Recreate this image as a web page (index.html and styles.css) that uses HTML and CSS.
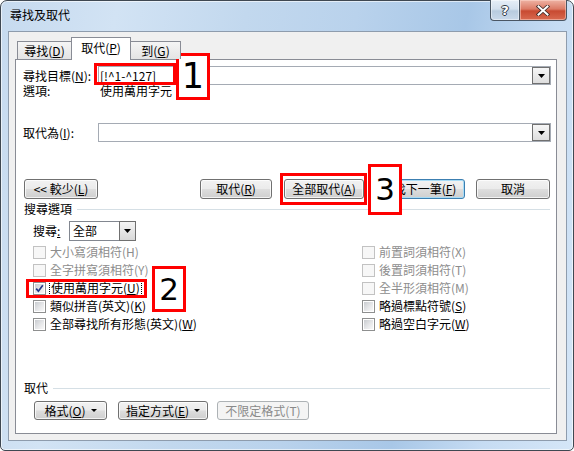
FILE: index.html
```html
<!DOCTYPE html>
<html lang="zh-Hant">
<head>
<meta charset="utf-8">
<title>尋找及取代</title>
<link rel="stylesheet" href="styles.css">
</head>
<body>
<div class="window">
  <div class="titlebar">
    <div class="title">尋找及取代</div>
    <div class="caption">
      <div class="cbtn help"><span class="qmark">?</span></div>
      <div class="cbtn close">
        <svg width="14" height="11" viewBox="0 0 14 11"><path d="M2.5 1.5 L11.5 9.5 M11.5 1.5 L2.5 9.5" stroke="#3b2a28" stroke-width="3.6" stroke-linecap="square"/><path d="M2.5 1.5 L11.5 9.5 M11.5 1.5 L2.5 9.5" stroke="#ffffff" stroke-width="2" stroke-linecap="square"/></svg>
      </div>
    </div>
  </div>
  <div class="client">
    <div class="tabs">
      <div class="tab t1">尋找(<u>D</u>)</div>
      <div class="tab active t2">取代(<u>P</u>)</div>
      <div class="tab t3">到(<u>G</u>)</div>
    </div>
    <div class="panel">
      <div class="row-field">
        <span class="lbl">尋找目標(<u>N</u>):</span>
        <div class="combo"><span class="val">[!^1-^127]</span><span class="drop"><svg width="7" height="4" viewBox="0 0 7 4"><polygon points="0,0 7,0 3.5,4" fill="#000"/></svg></span></div>
      </div>
      <div class="row-opt"><span class="lbl2">選項:</span><span>使用萬用字元</span></div>
      <div class="row-field replace">
        <span class="lbl">取代為(<u>I</u>):</span>
        <div class="combo"><span class="val"></span><span class="drop"><svg width="7" height="4" viewBox="0 0 7 4"><polygon points="0,0 7,0 3.5,4" fill="#000"/></svg></span></div>
      </div>
      <div class="btn-row">
        <button class="btn b-less">&lt;&lt; 較少(<u>L</u>)</button>
        <button class="btn b-rep">取代(<u>R</u>)</button>
        <button class="btn b-all">全部取代(<u>A</u>)</button>
        <button class="btn b-next default">尋找下一筆(<u>F</u>)</button>
        <button class="btn b-cancel">取消</button>
      </div>
      <div class="group g-search"><span>搜尋選項</span><span class="gline"></span></div>
      <div class="search-row">
        <span class="slbl">搜尋<u>:</u></span>
        <div class="select"><span class="sval">全部</span><span class="sdrop"><svg width="7" height="4" viewBox="0 0 7 4"><polygon points="0,0 7,0 3.5,4" fill="#000"/></svg></span></div>
      </div>
      <div class="checks">
        <div class="col">
          <div class="chk disabled"><span class="box"></span><span>大小寫須相符(H)</span></div>
          <div class="chk disabled"><span class="box"></span><span>全字拼寫須相符(Y)</span></div>
          <div class="chk"><span class="box"><svg width="11" height="11" viewBox="0 0 11 11"><path d="M2.2 5.6 L4.4 8.2 L8.8 2.2" stroke="#24378a" stroke-width="1.7" fill="none"/></svg></span><span class="focus">使用萬用字元(<u>U</u>)</span></div>
          <div class="chk"><span class="box"></span><span>類似拼音(英文)(<u>K</u>)</span></div>
          <div class="chk"><span class="box"></span><span>全部尋找所有形態(英文)(<u>W</u>)</span></div>
        </div>
        <div class="col">
          <div class="chk disabled"><span class="box"></span><span>前置詞須相符(X)</span></div>
          <div class="chk disabled"><span class="box"></span><span>後置詞須相符(T)</span></div>
          <div class="chk disabled"><span class="box"></span><span>全半形須相符(M)</span></div>
          <div class="chk"><span class="box"></span><span>略過標點符號(<u>S</u>)</span></div>
          <div class="chk"><span class="box"></span><span>略過空白字元(<u>W</u>)</span></div>
        </div>
      </div>
      <div class="group g-replace"><span>取代</span><span class="gline"></span></div>
      <div class="bottom-btns">
        <button class="btn b-fmt">格式(<u>O</u>)<i class="arr"></i></button>
        <button class="btn b-spec">指定方式(<u>E</u>)<i class="arr"></i></button>
        <button class="btn b-nofmt" disabled>不限定格式(T)</button>
      </div>
    </div>
  </div>
</div>

<div class="mark hl1"></div>
<div class="mark num n1">1</div>
<div class="mark hl3"></div>
<div class="mark num n3">3</div>
<div class="mark hl2"></div>
<div class="mark num n2">2</div>
</body>
</html>
```

FILE: styles.css
```css
* { box-sizing: border-box; }
html, body { margin: 0; padding: 0; }
body {
  width: 574px;
  height: 451px;
  background: #ffffff;
  font-family: "Noto Sans CJK TC", "Noto Sans CJK SC", sans-serif;
  font-size: 12px;
  color: #000;
  position: relative;
  overflow: hidden;
}
u { text-underline-offset: 1px; }

.window {
  width: 574px;
  height: 451px;
  border: 1px solid #3f4852;
  border-radius: 7px 7px 5px 5px;
  background: linear-gradient(100deg, #c6daef 0%, #d2e3f4 18%, #c2d8ee 38%, #b9d2ec 55%, #a8c7e7 72%, #c6dcf3 86%, #d5e6f7 100%);
  box-shadow: inset 0 0 0 1px rgba(255,255,255,0.6);
  display: flex;
  flex-direction: column;
  padding: 0 6px 9px 7px;
}

.titlebar {
  height: 30px;
  flex: none;
  display: flex;
  align-items: flex-start;
}
.title {
  padding-left: 2px;
  margin-top: 7px;
  line-height: 14px;
}
.caption {
  margin-left: auto;
  display: flex;
  margin-top: -1px;
}
.cbtn {
  height: 21px;
  border: 1px solid #4a5664;
  border-top: none;
  display: flex;
  align-items: center;
  justify-content: center;
}
.help {
  width: 29px;
  border-right: none;
  border-radius: 0 0 0 4px;
  background: linear-gradient(#e6eef7 0%, #d3e0ee 45%, #b8cbdf 55%, #c9d9ea 100%);
  box-shadow: inset 0 0 0 1px rgba(255,255,255,0.45);
}
.qmark {
  font-family: "DejaVu Sans", sans-serif;
  font-weight: bold;
  font-size: 13px;
  line-height: 13px;
  color: #fff;
  text-shadow: 1px 0 0 #2f3a46, -1px 0 0 #2f3a46, 0 1px 0 #2f3a46, 0 -1px 0 #2f3a46;
}
.close {
  width: 48px;
  border-radius: 0 0 4px 0;
  background: linear-gradient(#eeb3a4 0%, #dc7b66 45%, #c84a31 55%, #d86a50 100%);
  box-shadow: inset 0 0 0 1px rgba(255,220,210,0.5);
}
.close svg { display: block; }

.client {
  flex: 1;
  background: #f0f0f0;
  border: 1px solid #8e9cad;
  padding: 5px 8px 0 6px;
  display: flex;
  flex-direction: column;
}

.tabs {
  display: flex;
  align-items: flex-end;
  height: 23px;
  margin-left: 2px;
  margin-bottom: -1px;
  position: relative;
  z-index: 1;
}
.tab {
  height: 18px;
  margin-bottom: 1px;
  border: 1px solid #898c95;
  border-bottom: none;
  background: linear-gradient(#f5f5f5, #e4e4e4);
  display: flex;
  align-items: center;
  justify-content: center;
  line-height: 14px;
  padding-top: 1px;
}
.t1 { width: 55px; }
.t2 { width: 60px; margin-left: -1px; }
.t3 { width: 51px; margin-left: -1px; }
.tab.active {
  height: 23px;
  margin-bottom: 0;
  background: #fff;
  position: relative;
  z-index: 2;
  padding-top: 0;
  padding-bottom: 3px;
}

.panel {
  width: 542px;
  height: 375px;
  flex: none;
  background: #fff;
  border: 1px solid #898c95;
  padding: 6px 5px 0 7px;
}

.row-field {
  display: flex;
  align-items: center;
  height: 19px;
}
.lbl { width: 75px; flex: none; line-height: 14px; }
.combo {
  flex: 1;
  height: 19px;
  border: 1px solid #a5abb4;
  display: flex;
  align-items: center;
  background: #fff;
}
.val { flex: 1; padding-left: 1px; line-height: 14px; }
.drop {
  width: 18px;
  height: 17px;
  border: 1px solid #707070;
  background: linear-gradient(#f6f6f6, #dedede);
  display: flex;
  align-items: center;
  justify-content: center;
}
.drop svg, .sdrop svg { display: block; }

.row-opt {
  display: flex;
  height: 12px;
  line-height: 12px;
}
.lbl2 { width: 77px; flex: none; }

.replace { margin-top: 26px; }

.btn {
  font: inherit;
  color: #000;
  height: 20px;
  padding: 0;
  border: 1px solid #707070;
  border-radius: 3px;
  background: linear-gradient(#f2f2f2 0%, #ebebeb 48%, #dddddd 52%, #cfcfcf 100%);
  box-shadow: inset 0 0 0 1px rgba(255,255,255,0.75);
  line-height: 14px;
  display: flex;
  align-items: center;
  justify-content: center;
}
.btn-row {
  display: flex;
  margin-top: 37px;
  height: 20px;
}
.b-less { width: 74px; margin-left: 1px; }
.b-rep { width: 72px; margin-left: 102px; }
.b-all { width: 80px; margin-left: 12px; }
.b-next { width: 92px; margin-left: 9px; }
.b-cancel { width: 74px; margin-left: 11px; }
.btn.default {
  border-color: #3c7fb1;
  box-shadow: inset 0 0 0 1px #a8dcf6;
}

.group {
  display: flex;
  align-items: center;
  height: 14px;
  line-height: 14px;
  margin-left: 1px;
}
.gline {
  flex: 1;
  height: 1px;
  background: #d5dfe5;
  margin-left: 5px;
  margin-right: 1px;
}
.g-search { margin-top: 3px; }
.g-replace { margin-top: 48px; }

.search-row {
  display: flex;
  align-items: center;
  height: 20px;
  margin-top: 5px;
  padding-left: 10px;
}
.slbl { width: 36px; flex: none; line-height: 14px; }
.select {
  width: 67px;
  height: 20px;
  border: 1px solid #828790;
  display: flex;
  align-items: center;
  background: #fff;
}
.sval { flex: 1; padding-left: 3px; line-height: 14px; }
.sdrop {
  width: 17px;
  height: 20px;
  margin: -1px -1px -1px 0;
  border: 1px solid #707070;
  background: linear-gradient(#f4f4f4, #d9d9d9);
  display: flex;
  align-items: center;
  justify-content: center;
}

.checks {
  display: flex;
  margin-top: 2px;
  padding-left: 10px;
}
.col:first-child { width: 329px; }
.chk {
  height: 18px;
  display: flex;
  align-items: center;
  line-height: 14px;
}
.box {
  width: 13px;
  height: 13px;
  flex: none;
  margin-right: 4px;
  border: 1px solid #8e8f8f;
  background: #fff;
  position: relative;
  display: flex;
  align-items: center;
  justify-content: center;
}
.box::before {
  content: "";
  position: absolute;
  left: 1px; top: 1px; right: 1px; bottom: 1px;
  background: linear-gradient(135deg, #c9ccd0 0%, #e6e7e9 55%, #f8f8f8 100%);
}
.box svg { position: relative; z-index: 1; display: block; }
.chk.disabled { color: #8d8d8d; }
.chk.disabled .box { border-color: #c2c2c2; background: #f7f7f7; }
.chk.disabled .box::before { display: none; }
.focus {
  outline: 1px dotted #000;
  outline-offset: 0;
  padding: 0 1px;
}

.bottom-btns {
  display: flex;
  margin-top: 6px;
  height: 19px;
}
.bottom-btns .btn { height: 19px; }
.b-fmt { width: 73px; margin-left: 11px; }
.b-spec { width: 90px; margin-left: 11px; }
.b-nofmt { width: 92px; margin-left: 9px; }
.btn:disabled {
  color: #8a8a8a;
  border-color: #adb2b5;
  background: #f4f4f4;
  box-shadow: none;
}
.arr {
  display: inline-block;
  width: 0; height: 0;
  border-left: 3px solid transparent;
  border-right: 3px solid transparent;
  border-top: 3px solid #000;
  margin-left: 5px;
}

.mark {
  position: absolute;
  border: 3px solid #ff0000;
}
.num {
  background: #fff;
  font-family: "DejaVu Sans", sans-serif;
  color: #000;
  display: flex;
  align-items: center;
  justify-content: center;
  line-height: 1;
}
.hl1 { left: 94px; top: 63px; width: 82px; height: 22px; }
.n1 { left: 176px; top: 53px; width: 34px; height: 47px; font-size: 35px; }
.hl3 { left: 280px; top: 173px; width: 87px; height: 32px; }
.n3 { left: 368px; top: 164px; width: 34px; height: 51px; font-size: 31px; }
.hl2 { left: 26px; top: 279px; width: 121px; height: 19px; }
.n2 { left: 152px; top: 266px; width: 34px; height: 46px; font-size: 31px; }
```
